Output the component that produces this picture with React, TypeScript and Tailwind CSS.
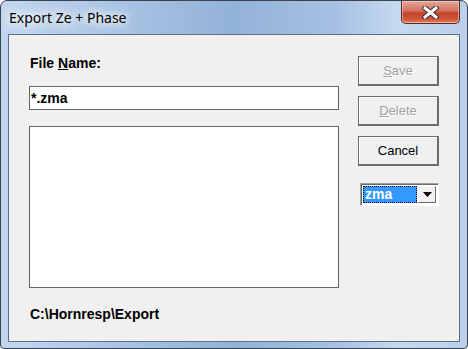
import React from "react";

function Btn({ children, disabled }: { children: React.ReactNode; disabled?: boolean }) {
  return (
    <div
      className={
        "w-[81px] h-[30px] flex items-center justify-center border border-[#6b6b6b] border-r-2 border-b-2 bg-[#f0f0f0] shadow-[inset_1px_1px_0_#ffffff] text-[13px] " +
        (disabled ? "text-[#a0a0a0] [text-shadow:1px_1px_0_#ffffff]" : "text-black")
      }
      style={{ fontFamily: '"Liberation Sans", Arial, sans-serif' }}
    >
      {children}
    </div>
  );
}

export default function App() {
  const sans = { fontFamily: '"Liberation Sans", Arial, sans-serif' };
  return (
    <div className="w-[468px] h-[349px] relative overflow-hidden rounded-t-[7px] rounded-b-[4px] border border-[#3a4350] bg-[linear-gradient(90deg,#c3d7ef_0%,#a9c4e4_25%,#93b2d8_50%,#a6c1e3_72%,#c5d9ef_85%,#b9cfea_100%)] flex flex-col">
      <div className="h-[33px] flex items-start pl-[8px] pt-[7px] shrink-0">
        <span
          className="text-[14px] text-black leading-[20px] [text-shadow:0_0_8px_#ffffff,0_0_10px_#ffffff,0_0_14px_#ffffff]"
          style={{ fontFamily: '"Noto Sans", "Open Sans", sans-serif' }}
        >
          Export Ze + Phase
        </span>
      </div>
      <div className="absolute top-0 right-[7px] w-[59px] h-[23px] rounded-b-[5px] border border-t-0 border-[#5a2a25] bg-[linear-gradient(180deg,#e7a99b_0%,#d2705d_45%,#c24329_55%,#d05a3f_85%,#e08a6b_100%)] shadow-[inset_0_0_0_1px_rgba(255,220,210,0.5)] flex items-center justify-center">
        <svg width="17" height="13" viewBox="0 0 17 13">
          <path d="M3 2 L14 11 M14 2 L3 11" stroke="#3b2a28" strokeWidth="5" strokeLinecap="square" />
          <path d="M3 2 L14 11 M14 2 L3 11" stroke="#ffffff" strokeWidth="3" strokeLinecap="square" />
        </svg>
      </div>
      <div className="mx-[7px] mb-[6px] flex-1 border border-[#5b6f88] bg-[#f0f0f0] flex">
        <div className="pl-[20px] pt-[20px] w-[330px] flex flex-col shrink-0" style={sans}>
          <div className="text-[14px] font-bold leading-[16px] text-black pl-[1px]">
            File <span className="underline">N</span>ame:
          </div>
          <div className="mt-[15px] w-[310px] h-[24px] bg-white border border-[#646464] flex items-center pl-[1px] text-[14px] font-bold text-black">
            *.zma
          </div>
          <div className="mt-[16px] w-[310px] h-[162px] bg-white border border-[#646464]" />
          <div className="mt-[18px] text-[14px] font-bold leading-[16px] text-black pl-[1px]">
            C:\Hornresp\Export
          </div>
        </div>
        <div className="ml-[19px] pt-[21px] flex flex-col gap-[10px]">
          <Btn disabled>
            <span className="underline">S</span>ave
          </Btn>
          <Btn disabled>
            <span className="underline">D</span>elete
          </Btn>
          <Btn>Cancel</Btn>
          <div className="mt-[7px] ml-[2px] w-[79px] h-[23px] border border-[#a0a0a0] border-b-white border-r-white shadow-[inset_1px_1px_0_#696969] bg-white flex p-[2px] pl-[2px]">
            <div className="flex-1 bg-[#3399ff] border border-dotted border-[#000000] flex items-center pl-[1px] text-[14px] font-bold text-white" style={sans}>
              zma
            </div>
            <div className="w-[18px] ml-[1px] bg-[#f0f0f0] border border-[#6b6b6b] border-t-white border-l-white flex items-center justify-center">
              <svg width="9" height="5" viewBox="0 0 9 5">
                <path d="M0 0 H9 L4.5 5 Z" fill="#000" />
              </svg>
            </div>
          </div>
        </div>
      </div>
    </div>
  );
}
